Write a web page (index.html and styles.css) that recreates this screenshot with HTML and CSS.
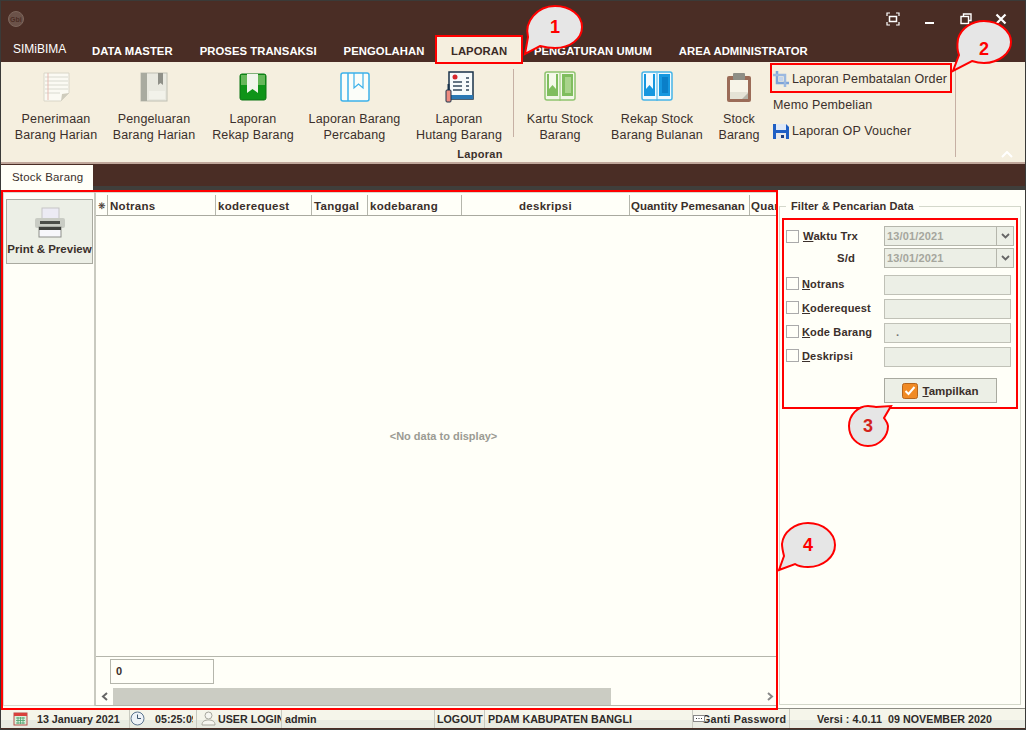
FILE: index.html
```html
<!DOCTYPE html>
<html lang="id">
<head>
<meta charset="utf-8">
<title>SIMIBIMA</title>
<link rel="stylesheet" href="styles.css">
</head>
<body>
<div class="window">
  <header class="titlebar">
    <svg class="logo" width="18" height="18" viewBox="0 0 18 18"><circle cx="9" cy="9" r="7.5" fill="#6b5249" stroke="#7d665c"/><text x="3" y="12" class="logo-text">Gbi</text></svg>
    <div class="win-controls">
      <svg class="wc-first" width="14" height="14" viewBox="0 0 14 14" fill="none" stroke="#fff" stroke-width="1.2"><path d="M1 4V1h3M10 1h3v3M13 10v3h-3M4 13H1v-3"/><rect x="3.5" y="4.5" width="7" height="5" stroke-width="1.5"/></svg>
      <svg width="14" height="14" viewBox="0 0 14 14"><rect x="2" y="10" width="9" height="2" fill="#fff"/></svg>
      <svg width="14" height="14" viewBox="0 0 14 14" fill="none" stroke="#fff" stroke-width="1.4"><rect x="2" y="4.5" width="7.500" height="7"/><path d="M4.500 4V2H12v6.500h-2.500"/></svg>
      <svg width="14" height="14" viewBox="0 0 14 14" fill="none" stroke="#fff" stroke-width="2.2"><path d="M2.500 2.500l9 9M11.500 2.500l-9 9"/></svg>
    </div>
  </header>
  <nav class="menubar">
    <span class="app-tab">SIMiBIMA</span>
    <span class="menu-item">DATA MASTER</span>
    <span class="menu-item">PROSES TRANSAKSI</span>
    <span class="menu-item before-active">PENGOLAHAN</span>
    <span class="menu-item active">LAPORAN</span>
    <span class="menu-item next">PENGATURAN UMUM</span>
    <span class="menu-item">AREA ADMINISTRATOR</span>
  </nav>
  <section class="ribbon">
    <div class="ribbon-group">
      <div class="ribbon-items">
        <div class="rb w98"><svg class="rb-icon" viewBox="0 0 32 32"><path d="M4 2h25v20l-8 8H4z" fill="#fbfaf3" stroke="#d9d6c8"/><path d="M5 6h23M5 10h23M5 14h23M5 18h23M5 22h15" stroke="#d9dad0"/><path d="M8 2v27" stroke="#e7b9b0"/><path d="M21 30l1-7 7-1z" fill="#cfccbd"/></svg><span>Penerimaan<br>Barang Harian</span></div>
        <div class="rb w98"><svg class="rb-icon" viewBox="0 0 32 32"><rect x="3" y="2" width="26" height="28" fill="#e9e9e0" stroke="#c0c0b4"/><rect x="3" y="2" width="6" height="28" fill="#a9aba0"/><path d="M20 2h5v12l-2.500-2-2.500 2z" fill="#8f9088"/><rect x="11" y="20" width="16" height="8" fill="#f2f2ea"/></svg><span>Pengeluaran<br>Barang Harian</span></div>
        <div class="rb w100"><svg class="rb-icon" viewBox="0 0 32 32"><rect x="3" y="3" width="26" height="26" rx="2" fill="#0f9418" stroke="#0b7412"/><rect x="4" y="4" width="24" height="10" fill="#66b75a"/><path d="M10 3h11v19l-5.500-4-5.500 4z" fill="#f2f6ec"/></svg><span>Laporan<br>Rekap Barang</span></div>
        <div class="rb w103"><svg class="rb-icon" viewBox="0 0 32 32"><rect x="2" y="2" width="28" height="28" rx="2" fill="#fbfdf9" stroke="#3cb1ea" stroke-width="1.500"/><path d="M9 2v28" stroke="#3cb1ea" stroke-width="1.500"/><path d="M15 2v15l4.500-4 4.500 4V2" fill="none" stroke="#3cb1ea" stroke-width="1.200"/></svg><span>Laporan Barang<br>Percabang</span></div>
        <div class="rb w106"><svg class="rb-icon" viewBox="0 0 32 32"><rect x="6" y="1" width="24" height="27" fill="#f7fbfb" stroke="#19324a" stroke-width="1.500"/><rect x="6" y="24" width="24" height="4" fill="#2a78b4"/><circle cx="12" cy="6" r="2.500" fill="#d8282c"/><path d="M10 11h9M10 15h9M10 19h9M23 7h3M23 11h3M23 15h3M23 19h3" stroke="#344a5c" stroke-width="1.400"/><rect x="3" y="19" width="5" height="12" rx="1" fill="#ee8c80" stroke="#19324a"/><path d="M5.500 13v6" stroke="#19324a" stroke-width="2"/></svg><span>Laporan<br>Hutang Barang</span></div>
        <i class="rb-sep"></i>
        <div class="rb w90"><svg class="rb-icon" viewBox="0 0 32 32"><rect x="1" y="1" width="30" height="28" rx="2" fill="#f2f7e8" stroke="#8fc46f" stroke-width="1.500"/><path d="M3 3h11v22H3zM18 3h11v22H18z" fill="#7fbd5e"/><path d="M21 6h6v16h-6z" fill="#a9d48c"/><path d="M5 3h7v15l-3.500-4L5 18z" fill="#f5f9ea"/><path d="M16 2v28" stroke="#8fc46f"/></svg><span>Kartu Stock<br>Barang</span></div>
        <div class="rb w104"><svg class="rb-icon" viewBox="0 0 32 32"><rect x="1" y="1" width="30" height="28" rx="2" fill="#eff9fe" stroke="#45b4e8" stroke-width="1.500"/><path d="M3 3h11v22H3zM18 3h11v22H18z" fill="#1597df"/><path d="M21 6h6v16h-6z" fill="#0a7fc8"/><path d="M5 3h7v15l-3.500-4L5 18z" fill="#f3fbff"/><path d="M16 2v28" stroke="#45b4e8"/></svg><span>Rekap Stock<br>Barang Bulanan</span></div>
        <div class="rb w60"><svg class="rb-icon" viewBox="0 0 32 32"><rect x="4" y="5" width="24" height="26" rx="2" fill="#9b6c58"/><rect x="7" y="9" width="18" height="19" fill="#f7f4e8"/><rect x="7" y="21" width="18" height="7" fill="#e5e3d6"/><rect x="10" y="2" width="12" height="7" rx="1" fill="#8e8e86"/><path d="M25 28v-6l-6 6z" fill="#b5b4a8"/></svg><span>Stock<br>Barang</span></div>
      </div>
      <div class="group-label">Laporan</div>
    </div>
    <ul class="rb-list">
      <li><svg width="16" height="16" viewBox="0 0 16 16"><path d="M4 0v12h12" fill="none" stroke="#7ea4d8" stroke-width="2.500"/><path d="M0 4h12v12" fill="none" stroke="#9cb9e0" stroke-width="2.500"/><rect x="6" y="6" width="4" height="4" fill="#c3d4ec"/></svg>Laporan Pembatalan Order</li>
      <li class="noicon">Memo Pembelian</li>
      <li><svg width="16" height="16" viewBox="0 0 16 16"><path d="M0 1h13l3 3v12H0z" fill="#1f5fc4"/><rect x="3" y="1" width="10" height="6" fill="#dfe9f8"/><rect x="3" y="10" width="10" height="6" fill="#e9e9e9"/><rect x="8" y="12" width="3" height="3" fill="#1f3f80"/></svg>Laporan OP Voucher</li>
    </ul>
    <i class="rb-sep tall"></i>
    <svg class="collapse" width="12" height="7" viewBox="0 0 12 7"><path d="M1 6l5-5 5 5" fill="none" stroke="#fff" stroke-width="2"/></svg>
  </section>
  <div class="tabstrip"><span class="doc-tab">Stock Barang</span></div>
  <main class="content">
    <aside class="side">
      <button class="print-btn">
        <svg width="32" height="32" viewBox="0 0 32 32"><rect x="8" y="1" width="17" height="11" fill="#ecebf4" stroke="#c5c5c5"/><rect x="1" y="11" width="30" height="10" rx="2" fill="#c9ccc4"/><rect x="6" y="14" width="20" height="3" fill="#4a4d48"/><rect x="5" y="20" width="22" height="10" fill="#f7f7fb" stroke="#8d8f8a"/><rect x="5" y="20" width="22" height="3" fill="#3e403c"/></svg>
        Print &amp; Preview
      </button>
    </aside>
    <section class="grid">
      <div class="grid-head">
        <span class="c-star">❋</span>
        <span class="c1">Notrans</span>
        <span class="c2">koderequest</span>
        <span class="c3">Tanggal</span>
        <span class="c4">kodebarang</span>
        <span class="c5">deskripsi</span>
        <span class="c6">Quantity Pemesanan</span>
        <span class="c7">Quan</span>
      </div>
      <div class="grid-body">&lt;No data to display&gt;</div>
      <div class="grid-foot"><span class="sum">0</span></div>
      <div class="hscroll">
        <svg width="7" height="9" viewBox="0 0 7 9"><path d="M6 1L2 4.500 6 8" fill="none" stroke="#666" stroke-width="2"/></svg>
        <div class="track"><div class="thumb"></div></div>
        <svg width="7" height="9" viewBox="0 0 7 9"><path d="M1 1l4 3.500L1 8" fill="none" stroke="#888" stroke-width="2"/></svg>
      </div>
    </section>
    <aside class="filter">
      <div class="fieldset">
        <div class="legend">Filter &amp; Pencarian Data</div>
        <form class="form">
          <div class="row r-date"><i class="cb"></i><label><u>W</u>aktu Trx</label><div class="date"><span>13/01/2021</span><b><svg width="9" height="6" viewBox="0 0 9 6"><path d="M1 1l3.500 3.500L8 1" fill="none" stroke="#666" stroke-width="1.800"/></svg></b></div></div>
          <div class="row r-date second"><i class="cb-none"></i><label class="sd">S/d</label><div class="date"><span>13/01/2021</span><b><svg width="9" height="6" viewBox="0 0 9 6"><path d="M1 1l3.500 3.500L8 1" fill="none" stroke="#666" stroke-width="1.800"/></svg></b></div></div>
          <div class="row t"><i class="cb"></i><label><u>N</u>otrans</label><div class="input"></div></div>
          <div class="row t"><i class="cb"></i><label><u>K</u>oderequest</label><div class="input"></div></div>
          <div class="row t"><i class="cb"></i><label><u>K</u>ode Barang</label><div class="input dot">.</div></div>
          <div class="row t"><i class="cb"></i><label><u>D</u>eskripsi</label><div class="input"></div></div>
          <button class="go" type="button"><svg width="16" height="16" viewBox="0 0 16 16"><rect x=".5" y=".5" width="15" height="15" rx="2" fill="#f08a24" stroke="#b5651d"/><path d="M3.500 8l3 3 6-7" fill="none" stroke="#fff" stroke-width="2"/></svg><span><u>T</u>ampilkan</span></button>
        </form>
      </div>
    </aside>
  </main>
  <footer class="status">
    <span class="s s1"><svg width="15" height="15" viewBox="0 0 15 15"><rect x="1" y="2" width="13" height="12" fill="#d9f0dc" stroke="#b8504a"/><rect x="1" y="2" width="13" height="3" fill="#d8413c"/><path d="M3 7h9M3 9.500h9M3 12h9M5 6v7M7.500 6v7M10 6v7" stroke="#4aa06a" stroke-width=".8"/></svg><b>13 January 2021</b></span>
    <span class="s s2"><svg width="15" height="15" viewBox="0 0 15 15"><circle cx="7.500" cy="7.500" r="6.500" fill="#eef3f8" stroke="#5c7590"/><path d="M7.500 3.500v4H11" fill="none" stroke="#3f5870"/></svg><b class="clip-time">05:25:09</b></span>
    <span class="s s3"><svg width="15" height="15" viewBox="0 0 15 15" fill="#f6f6f0" stroke="#a8a89e"><circle cx="7.500" cy="4.500" r="3.500"/><path d="M1 14c0-4 3-5 6.500-5S14 10 14 14z"/></svg><b>USER LOGIN</b></span>
    <span class="s s4"><b>admin</b></span>
    <span class="s s5"><b>LOGOUT</b></span>
    <span class="s s6"><b>PDAM KABUPATEN BANGLI</b></span>
    <span class="s s7"><svg width="12" height="7" viewBox="0 0 12 7"><rect x=".5" y=".5" width="11" height="6" fill="#fff" stroke="#888"/><path d="M3 3.500h1M5.500 3.500h1M8 3.500h1" stroke="#333"/></svg><b class="gp">Ganti Password</b></span>
    <span class="s s8"><b>Versi : 4.0.11&nbsp; 09 NOVEMBER 2020</b></span>
  </footer>
  <i class="mark m1"></i><i class="mark m2"></i><i class="mark m3"></i><i class="mark m4"></i>
  <svg class="callouts" width="1026" height="730" viewBox="0 0 1026 730">
    <g class="bubble">
      <path d="M528 37C524 22 537 6 555 6c15 0 27 9 27 21s-12 21-27 21c-6 0-11-1-15-2l-15 8z"/>
      <path d="M958 39c3-11 14-18 26-18 15 0 27 10 27 21s-12 21-27 21c-6 0-9-1-12-2l-19 10 6-16c-2-5-2-10-1-16z"/>
      <path d="M849 426c0-11 9-20 19-20 3 0 6 1 8 1l15-1-7 12c2 3 4 5 4 8 0 11-9 20-20 20s-19-9-19-20z"/>
      <path d="M782 544c1-12 13-21 26-21 15 0 27 10 27 22s-12 22-27 22c-6 0-10-1-13-3l-16 6 5-14c-1-4-2-8-2-12z"/>
    </g>
    <text x="555" y="33" class="num">1</text>
    <text x="984" y="55" class="num">2</text>
    <text x="868" y="432" class="num alt">3</text>
    <text x="808" y="551" class="num">4</text>
  </svg>
</div>
</body>
</html>
```
FILE: styles.css
```css
* { box-sizing: border-box; }
html, body { margin: 0; padding: 0; }
body { width: 1026px; height: 730px; overflow: hidden; font-family: "Liberation Sans", Arial, sans-serif; }
svg { flex: none; }
.window { position: relative; width: 1026px; height: 730px; display: flex; flex-direction: column; background: #4a2d25; border: 1px solid #3a3a38; }

.titlebar { height: 34px; flex: none; display: flex; align-items: center; justify-content: space-between; padding: 0 17px 0 6px; margin-top: 1px; }
.logo-text { font-size: 7px; fill: #4a2d25; font-weight: 700; }
.win-controls { display: flex; gap: 21.500px; }
.wc-first { margin-right: 2px; }

.menubar { height: 26px; flex: none; display: flex; align-items: flex-end; color: #fff; font-size: 11.300px; font-weight: 700; letter-spacing: .05px; }
.app-tab { width: 74px; height: 26px; padding: 6px 0 0 12px; font-size: 12px; font-weight: 400; letter-spacing: 0; }
.menu-item { padding: 0 13.500px; height: 26px; line-height: 30px; white-space: nowrap; }
.menu-item:nth-child(2) { padding-left: 17px; }
.menu-item.before-active { padding-right: 12.500px; }
.menu-item.active { background: #f5efdf; color: #3b2a26; padding: 0 14px; width: 85px; flex: none; }
.menu-item.next { padding-left: 12px; }

.ribbon { height: 102px; flex: none; display: flex; background: #f5efdf; color: #3b2f2b; font-size: 12.500px; letter-spacing: .15px; padding-left: 6px; border-bottom: 2px solid #c0a79b; position: relative; }
.ribbon-group { width: 765px; flex: none; display: flex; flex-direction: column; }
.ribbon-items { display: flex; height: 85px; }
.rb { flex: none; display: flex; flex-direction: column; align-items: center; text-align: center; line-height: 16px; padding-top: 9px; white-space: nowrap; }
.rb-icon { width: 32px; height: 32px; margin-bottom: 8px; }
.w98 { width: 98px; } .w100 { width: 100px; } .w103 { width: 103px; } .w106 { width: 106px; } .w90 { width: 90px; } .w104 { width: 104px; } .w60 { width: 60px; }
.rb-sep { display: block; flex: none; width: 1px; height: 68px; margin: 7px 1px 0 1px; background: #c6b0a4; }
.rb-sep.tall { height: 95px; margin: 0; }
.group-label { font-size: 11px; font-weight: 700; text-align: center; padding-left: 181px; letter-spacing: .3px; margin-top: 1px; }
.rb-list { list-style: none; margin: 0; padding: 4px 0 0 1px; width: 183px; flex: none; }
.rb-list li { height: 26px; display: flex; align-items: center; gap: 3px; white-space: nowrap; }
.collapse { position: absolute; right: 12px; bottom: 4px; }

.tabstrip { height: 26px; flex: none; border-bottom: 4px solid #3f3e3b; padding-top: 1px; }
.doc-tab { display: block; width: 92px; height: 25px; background: #fffff8; color: #3b2f2b; font-size: 11.500px; letter-spacing: .2px; line-height: 25px; padding-left: 11px; position: relative; }

.content { flex: 1; min-height: 0; display: flex; background: #fffff8; color: #3b2f2b; border-bottom: 1px solid #8c8c84; padding: 2px 2px 2px 2px; font-size: 11.500px; }
.side { width: 91px; flex: none; border: 1px solid #d8d9cf; border-right: 0; padding: 6px 2px; }
.print-btn { display: flex; flex-direction: column; align-items: center; width: 87px; height: 65px; padding: 7px 0 0; background: #ecefe6; border: 1px solid #a9aaa0; color: #3b2f2b; font: 700 11.500px "Liberation Sans", Arial, sans-serif; gap: 4px; white-space: nowrap; }

.grid { width: 683px; flex: none; display: flex; flex-direction: column; border-left: 2px solid #c9cac0; border-top: 1px solid #d8d9cf; border-bottom: 1px solid #b5b6ac; }
.grid-head { height: 21px; flex: none; margin-top: 2px; display: flex; border-bottom: 1px solid #a9aaa0; font-weight: 700; white-space: nowrap; overflow: hidden; letter-spacing: .28px; }
.grid-head span { display: block; flex: none; line-height: 22px; padding-left: 2px; border-right: 1px solid #b5b6ac; overflow: hidden; }
.c-star { width: 12px; font-weight: 400; font-size: 9px; }
.c1 { width: 108px; } .c2 { width: 96px; } .c3 { width: 56px; } .c4 { width: 94px; }
.grid-head .c5 { width: 168px; text-align: center; padding: 0; }
.grid-head .c6 { width: 120px; padding-left: 1px; letter-spacing: 0; }
.grid-head .c7 { width: 27px; border: 0; padding-left: 1px; }
.grid-body { flex: 1; display: flex; align-items: center; justify-content: center; color: #9b9b93; font-size: 11px; font-weight: 700; padding-left: 14px; border-bottom: 1px solid #b5b6ac; }
.grid-foot { height: 30px; flex: none; padding: 2px 0 0 14px; }
.sum { display: block; width: 104px; height: 25px; line-height: 23px; border: 1px solid #b5b6ac; padding-left: 5px; font-weight: 700; font-size: 11px; }
.hscroll { height: 17px; flex: none; display: flex; align-items: center; padding: 0 3px 0 5px; margin-top: 1px; }
.track { flex: 1; height: 17px; margin: 0 5px; }
.thumb { width: 498px; height: 17px; background: #cbccc3; }

.filter { flex: 1; padding: 1px 2px 1px 2px; }
.fieldset { position: relative; height: 100%; padding-top: 8px; }
.fieldset::before { content: ""; position: absolute; inset: 13px 0 0 0; border: 1px solid #d4d8cb; }
.legend { position: relative; display: block; width: fit-content; margin-left: 7px; padding: 0 5px; background: #fffff8; font-weight: 700; font-size: 11px; letter-spacing: .1px; line-height: 11px; color: #3b2f2b; }
.form { position: relative; padding: 14px 0 0 7px; }
.row { display: grid; grid-template-columns: 17px 81px 127px; align-items: center; height: 20px; margin-bottom: 4px; font-weight: 700; font-size: 11.300px; letter-spacing: .15px; white-space: nowrap; }
.row .cb { display: block; width: 13px; height: 13px; background: #fffff8; border: 1px solid #aaa; }
.row.t .cb { margin-bottom: 3px; }
.row.t label { margin: 0 0 3px -1px; font-size: 11px; }
.r-date { grid-template-columns: 17px 81px 130px; margin-bottom: 2px; }
.r-date.second { margin-bottom: 7px; }
.sd { padding-left: 34px; }
.date { height: 20px; display: flex; background: #ecefe6; border: 1px solid #b5b6ac; color: #a5a69d; font-weight: 700; font-size: 11px; line-height: 18px; padding-left: 2px; }
.date span { flex: 1; }
.date b { display: flex; align-items: center; justify-content: center; width: 17px; border-left: 1px solid #b5b6ac; }
.input { height: 20px; background: #ecefe6; border: 1px solid #c0c1b7; }
.dot { padding-left: 11px; line-height: 16px; color: #777; }
.go { display: flex; align-items: center; justify-content: center; gap: 4px; width: 113px; height: 25px; margin: 11px 0 0 98px; padding: 0; background: #ecefe6; border: 1px solid #a9aaa0; color: #3b2f2b; font: 700 11.500px "Liberation Sans", Arial, sans-serif; }

.status { height: 19px; flex: none; display: flex; align-items: center; font-size: 10.700px; color: #2e2a28; background: linear-gradient(#f5f5ea 60%, #e8ebe2 60%); white-space: nowrap; margin-bottom: 1px; }
.s { display: flex; align-items: center; height: 100%; overflow: hidden; flex: none; border-right: 1px solid #c9cac0; }
.s1 { width: 129px; padding-left: 12px; gap: 9px; }
.s2 { width: 67px; gap: 10px; }
.clip-time { width: 38px; overflow: hidden; }
.s3 { width: 85px; padding-left: 4px; gap: 2px; }
.s4 { width: 153px; padding-left: 3px; }
.s5 { width: 50px; padding-left: 2px; }
.s6 { width: 208px; padding-left: 3px; }
.s7 { width: 97px; overflow: visible; }
.s7 svg { position: relative; z-index: 1; }
.gp { margin-left: -3px; letter-spacing: .25px; }
.s8 { border: 0; padding-left: 27px; letter-spacing: .05px; }

.mark { position: absolute; display: block; border: 2px solid #f00; pointer-events: none; }
.m1 { left: 434px; top: 34px; width: 88px; height: 29px; }
.m2 { left: 769px; top: 62px; width: 182px; height: 30px; }
.m3 { left: 781px; top: 217px; width: 236px; height: 191px; }
.m4 { left: 0; top: 189px; width: 777px; height: 520px; }
.callouts { position: absolute; left: -1px; top: -1px; pointer-events: none; }
.bubble path { fill: #e6e6e6; stroke: #f00; stroke-width: 2; stroke-linejoin: miter; }
.num { font: 700 18px "Liberation Sans", Arial, sans-serif; fill: #f00; text-anchor: middle; }
.num.alt { fill: #d3231c; }
```
